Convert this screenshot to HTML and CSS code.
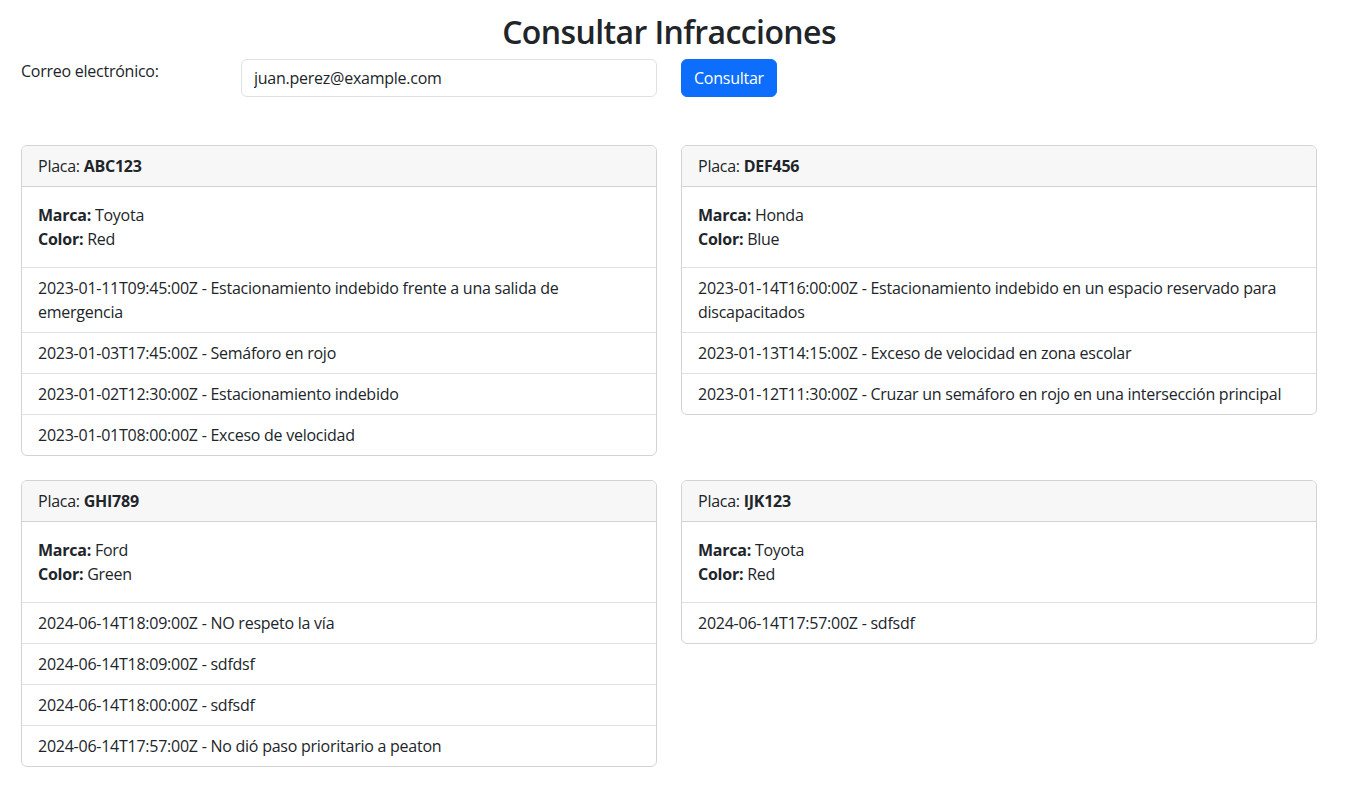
FILE: index.html
```html
<!DOCTYPE html>
<html lang="es">
<head>
<meta charset="utf-8">
<title>Consultar Infracciones</title>
<link rel="stylesheet" href="styles.css">
</head>
<body>
<div class="container">
  <h2 class="title">Consultar Infracciones</h2>
  <form class="query">
    <label class="query-label" for="email">Correo electrónico:</label>
    <input class="query-input" id="email" type="email" value="juan.perez@example.com">
    <button class="btn" type="button">Consultar</button>
  </form>

  <div class="cards">
    <div class="card">
      <div class="card-header">Placa: <strong>ABC123</strong></div>
      <div class="card-body">
        <p><strong>Marca:</strong> Toyota<br><strong>Color:</strong> Red</p>
      </div>
      <ul class="list">
        <li>2023-01-11T09:45:00Z - Estacionamiento indebido frente a una salida de emergencia</li>
        <li>2023-01-03T17:45:00Z - Semáforo en rojo</li>
        <li>2023-01-02T12:30:00Z - Estacionamiento indebido</li>
        <li>2023-01-01T08:00:00Z - Exceso de velocidad</li>
      </ul>
    </div>
    <div class="card">
      <div class="card-header">Placa: <strong>DEF456</strong></div>
      <div class="card-body">
        <p><strong>Marca:</strong> Honda<br><strong>Color:</strong> Blue</p>
      </div>
      <ul class="list">
        <li>2023-01-14T16:00:00Z - Estacionamiento indebido en un espacio reservado para discapacitados</li>
        <li>2023-01-13T14:15:00Z - Exceso de velocidad en zona escolar</li>
        <li>2023-01-12T11:30:00Z - Cruzar un semáforo en rojo en una intersección principal</li>
      </ul>
    </div>
    <div class="card">
      <div class="card-header">Placa: <strong>GHI789</strong></div>
      <div class="card-body">
        <p><strong>Marca:</strong> Ford<br><strong>Color:</strong> Green</p>
      </div>
      <ul class="list">
        <li>2024-06-14T18:09:00Z - NO respeto la vía</li>
        <li>2024-06-14T18:09:00Z - sdfdsf</li>
        <li>2024-06-14T18:00:00Z - sdfsdf</li>
        <li>2024-06-14T17:57:00Z - No dió paso prioritario a peaton</li>
      </ul>
    </div>
    <div class="card">
      <div class="card-header">Placa: <strong>IJK123</strong></div>
      <div class="card-body">
        <p><strong>Marca:</strong> Toyota<br><strong>Color:</strong> Red</p>
      </div>
      <ul class="list">
        <li>2024-06-14T17:57:00Z - sdfsdf</li>
      </ul>
    </div>
  </div>
</div>
</body>
</html>
```

FILE: styles.css
```css
* { box-sizing: border-box; }

html, body {
  margin: 0;
  padding: 0;
  background: #fff;
}

body {
  font-family: "Open Sans", "Noto Sans", sans-serif;
  font-size: 16px;
  line-height: 24px;
  letter-spacing: -0.25px;
  color: #212529;
}

.container {
  width: 1320px;
  margin-left: 9px;
  padding: 13px 12px 24px;
}

.title {
  margin: 0 0 8px;
  text-align: center;
  font-size: 32px;
  line-height: 38px;
  font-weight: 600;
  letter-spacing: -0.6px;
}

.query {
  display: flex;
  align-items: flex-start;
  gap: 24px;
  margin: 0;
}

.query-label {
  width: 196px;
  flex: none;
  line-height: 24px;
}

.query-input {
  width: 416px;
  flex: none;
  height: 38px;
  padding: 6px 12px;
  font: inherit;
  letter-spacing: inherit;
  color: #212529;
  border: 1px solid #dee2e6;
  border-radius: 6px;
  background: #fff;
  outline: none;
}

.btn {
  height: 38px;
  padding: 6px 12px;
  font: inherit;
  letter-spacing: inherit;
  color: #fff;
  background: #0d6efd;
  border: 1px solid #0d6efd;
  border-radius: 6px;
}

.cards {
  margin-top: 48px;
  display: grid;
  grid-template-columns: 636px 636px;
  column-gap: 24px;
  row-gap: 24px;
  align-items: start;
}

.card {
  border: 1px solid #d3d3d3;
  border-radius: 6px;
  overflow: hidden;
}

.card-header {
  padding: 8px 16px;
  background: #f7f7f7;
  border-bottom: 1px solid #d3d3d3;
}

.card-body {
  padding: 16px;
}

.card-body p {
  margin: 0;
}

strong { font-weight: 700; }

.list {
  list-style: none;
  margin: 0;
  padding: 0;
}

.list li {
  padding: 8px 16px;
  border-top: 1px solid #dee2e6;
}
```
